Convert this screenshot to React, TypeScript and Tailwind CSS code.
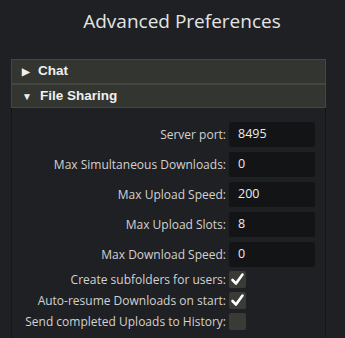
import React from "react";

const rows = [
  { label: "Server port:", value: "8495" },
  { label: "Max Simultaneous Downloads:", value: "0" },
  { label: "Max Upload Speed:", value: "200" },
  { label: "Max Upload Slots:", value: "8" },
  { label: "Max Download Speed:", value: "0" },
];

const checks = [
  { label: "Create subfolders for users:", checked: true },
  { label: "Auto-resume Downloads on start:", checked: true },
  { label: "Send completed Uploads to History:", checked: false },
];

function Check() {
  return (
    <svg width="17" height="17" viewBox="0 0 17 17">
      <path d="M3.5 9 L7 12.5 L13.5 3.5" fill="none" stroke="#ffffff" strokeWidth="2.6" strokeLinecap="round" strokeLinejoin="round" />
    </svg>
  );
}

export default function App() {
  return (
    <div
      className="w-[345px] h-[338px] bg-[#1f2023] overflow-hidden"
      style={{ fontFamily: '"Open Sans", "Noto Sans", sans-serif' }}
    >
      <div className="h-[59px] pt-[7px] pl-[19px] text-center text-[19px] text-[#e4e4e4]">Advanced Preferences</div>
      <div className="ml-[11px] w-[315px]">
        <div className="h-[25px] bg-[#333530] border border-[#44463f] flex items-center pl-[10px] gap-[8px] text-[13px] font-bold text-[#f0f0f0]" style={{ fontFamily: '"Liberation Sans", Arial, sans-serif' }}>
          <span className="text-[10px]">▶</span>
          <span className="text-[13.5px]">Chat</span>
        </div>
        <div className="h-[24px] bg-[#333530] border border-[#44463f] flex items-center pl-[10px] gap-[8px] text-[13px] font-bold text-[#f0f0f0]" style={{ fontFamily: '"Liberation Sans", Arial, sans-serif' }}>
          <span className="text-[10px]">▼</span>
          <span className="text-[13.5px]">File Sharing</span>
        </div>
        <div className="border-l border-r border-dotted border-[#0e0e0f] pt-[14px] pb-[10px] h-[240px]">
          <div className="flex flex-col gap-[5px]">
            {rows.map((r) => (
              <div key={r.label} className="flex items-center h-[25px]">
                <div className="w-[217px] text-right text-[12px] text-[#d2d2d2] pr-[3px] whitespace-nowrap">{r.label}</div>
                <div className="w-[86px] h-[25px] bg-[#131415] rounded-[2px] flex items-center pl-[9px] text-[12.5px] text-[#ececec]">{r.value}</div>
              </div>
            ))}
          </div>
          <div className="flex flex-col gap-[4px] mt-[4px]">
            {checks.map((c) => (
              <div key={c.label} className="flex items-center h-[17px]">
                <div className="w-[217px] text-right text-[12px] text-[#d2d2d2] pr-[3px] whitespace-nowrap">{c.label}</div>
                <div className="w-[17px] h-[17px] bg-[#3a3b37] rounded-[2px] flex items-center justify-center">
                  {c.checked && <Check />}
                </div>
              </div>
            ))}
          </div>
        </div>
      </div>
    </div>
  );
}
